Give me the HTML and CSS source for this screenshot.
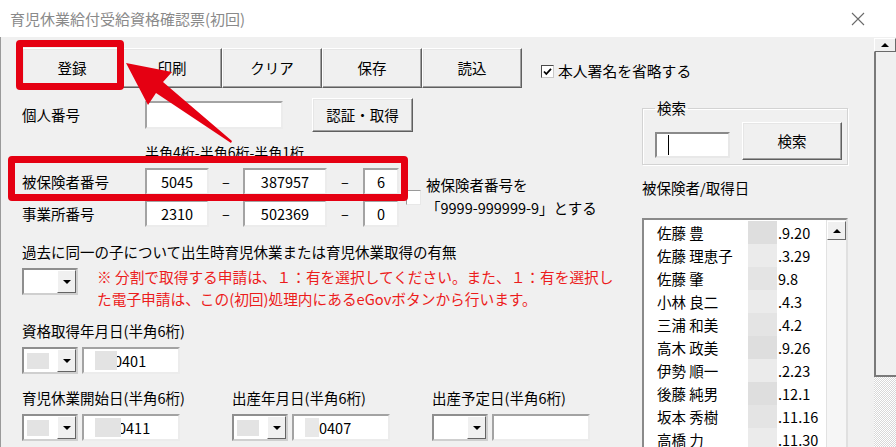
FILE: index.html
```html
<!DOCTYPE html>
<html lang="ja">
<head>
<meta charset="utf-8">
<title>育児休業給付受給資格確認票(初回)</title>
<link rel="stylesheet" href="styles.css">
</head>
<body>
<div class="win">
  <div class="titlebar">
    <span class="title">育児休業給付受給資格確認票(初回)</span>
    <svg class="close" width="14" height="14" viewBox="0 0 14 14"><path d="M1 1L13 13M13 1L1 13" stroke="#6a6a6a" stroke-width="1.1"/></svg>
  </div>
  <div class="client">
    <div class="form">
      <div class="toolbar">
        <div class="btn tbtn">登録</div>
        <div class="btn tbtn">印刷</div>
        <div class="btn tbtn">クリア</div>
        <div class="btn tbtn">保存</div>
        <div class="btn tbtn">読込</div>
        <div class="chkline">
          <span class="chk"><svg width="11" height="11" viewBox="0 0 11 11"><path d="M2 5.5L4.3 8L9 2.8" fill="none" stroke="#000" stroke-width="1.8"/></svg></span>
          <span>本人署名を省略する</span>
        </div>
      </div>
      <div class="cols">
        <div class="left">
          <div class="row r-kojin">
            <span class="lbl">個人番号</span>
            <span class="inp w-kojin"></span>
            <div class="btn btn-auth">認証・取得</div>
          </div>
          <div class="hint">半角4桁-半角6桁-半角1桁</div>
          <div class="idblock">
            <div class="idrows">
              <div class="row r-id">
                <span class="lbl">被保険者番号</span>
                <span class="inp w4 c">5045</span><span class="dash">–</span><span class="inp w6 c">387957</span><span class="dash d2">–</span><span class="inp w1 c">6</span>
              </div>
              <div class="row r-id r-id2">
                <span class="lbl">事業所番号</span>
                <span class="inp w4 c">2310</span><span class="dash">–</span><span class="inp w6 c">502369</span><span class="dash d2">–</span><span class="inp w1 c">0</span>
              </div>
            </div>
            <div class="idnote">
              <span class="box"></span>
              <div class="notetext">被保険者番号を<br>「9999-999999-9」とする</div>
            </div>
          </div>
          <div class="q">過去に同一の子について出生時育児休業または育児休業取得の有無</div>
          <div class="row r-warn">
            <span class="combo"><span class="cfield"></span><span class="dd"><i class="tri"></i></span></span>
            <div class="warn">※ 分割で取得する申請は、１：有を選択してください。また、１：有を選択し<br>た電子申請は、この(初回)処理内にあるeGovボタンから行います。</div>
          </div>
          <div class="q q2">資格取得年月日(半角6桁)</div>
          <div class="row r-date">
            <span class="combo"><span class="cfield"><i class="blur bl-c"></i></span><span class="dd"><i class="tri"></i></span></span>
            <span class="inp wd"><i class="blur bl-i"></i>0401</span>
          </div>
          <div class="dates">
            <div class="dcell">
              <div class="q">育児休業開始日(半角6桁)</div>
              <div class="row r-date">
                <span class="combo"><span class="cfield"><i class="blur bl-c"></i></span><span class="dd"><i class="tri"></i></span></span>
                <span class="inp wd"><i class="blur bl-i bl-w"></i>0411</span>
              </div>
            </div>
            <div class="dcell">
              <div class="q">出産年月日(半角6桁)</div>
              <div class="row r-date">
                <span class="combo"><span class="cfield"><i class="blur bl-c"></i></span><span class="dd"><i class="tri"></i></span></span>
                <span class="inp wd"><i class="blur bl-i bl-s"></i>0407</span>
              </div>
            </div>
            <div class="dcell">
              <div class="q">出産予定日(半角6桁)</div>
              <div class="row r-date">
                <span class="combo"><span class="cfield"></span><span class="dd"><i class="tri"></i></span></span>
                <span class="inp wd"></span>
              </div>
            </div>
          </div>
        </div>
        <div class="right">
          <fieldset class="group">
            <legend>検索</legend>
            <span class="inp sinp"><i class="caret"></i></span>
            <div class="btn sbtn">検索</div>
          </fieldset>
          <div class="listlbl">被保険者/取得日</div>
          <div class="list">
            <div class="items">
              <div class="it"><span class="nm">佐藤 豊</span><i class="pb p1"></i><span>.9.20</span></div>
              <div class="it"><span class="nm">佐藤 理恵子</span><i class="pb p2"></i><span>.3.29</span></div>
              <div class="it"><span class="nm">佐藤 肇</span><i class="pb p3"></i><span>9.8</span></div>
              <div class="it"><span class="nm">小林 良二</span><i class="pb p2"></i><span>.4.3</span></div>
              <div class="it"><span class="nm">三浦 和美</span><i class="pb p3"></i><span>.4.2</span></div>
              <div class="it"><span class="nm">高木 政美</span><i class="pb p1"></i><span>.9.26</span></div>
              <div class="it"><span class="nm">伊勢 順一</span><i class="pb p2"></i><span>.2.23</span></div>
              <div class="it"><span class="nm">後藤 純男</span><i class="pb p1"></i><span>.12.1</span></div>
              <div class="it"><span class="nm">坂本 秀樹</span><i class="pb p3"></i><span>.11.16</span></div>
              <div class="it"><span class="nm">高橋 力</span><i class="pb p2"></i><span>.11.30</span></div>
            </div>
            <div class="lscroll"><div class="sbtnup"><i class="utri"></i></div></div>
          </div>
        </div>
      </div>
    </div>
    <div class="vscroll">
      <div class="vup"><i class="utri"></i></div>
      <div class="vthumb"></div>
      <div class="vtrack"></div>
    </div>
  </div>
  <div class="hl hl1"></div>
  <div class="hl hl2"></div>
  <svg class="arrow" width="896" height="447" viewBox="0 0 896 447">
    <polygon points="126,63 172,72 163,82 232,141 231,143 156,93 148,105" fill="#e50012"/>
  </svg>
</div>
</body>
</html>
```

FILE: styles.css
```css
* { box-sizing: border-box; }
body {
  margin: 0;
  width: 896px;
  height: 447px;
  overflow: hidden;
  background: #f0f0f0;
  font-family: "Noto Sans CJK JP", "Noto Sans", sans-serif;
  font-size: 14.5px;
  color: #000;
}
.win { position: relative; width: 896px; height: 447px; }

.titlebar {
  height: 37px;
  background: #fff;
  display: flex;
  align-items: center;
  justify-content: space-between;
  padding: 0 31px 0 10px;
}
.title { color: #8a8a8a; font-size: 15px; line-height: 20px; }
.close { display: block; }

.client { display: flex; height: 410px; border-left: 1px solid #9a9a9a; }
.form { flex: 1; }

.btn {
  background: #f0f0f0;
  border: 1px solid;
  border-color: #fff #5f5f5f #5f5f5f #fff;
  box-shadow: inset -1px -1px #a0a0a0, inset 1px 1px #e6e6e6;
  display: flex;
  align-items: center;
  justify-content: center;
  line-height: 20px;
}
.toolbar { display: flex; align-items: center; padding: 11px 0 0 21px; height: 51px; }
.tbtn { width: 100px; height: 40px; }
.chkline { display: flex; align-items: center; margin-left: 19px; margin-top: 6px; line-height: 20px; font-size: 14.8px; }
.chk {
  width: 13px; height: 13px; background: #fff;
  border: 1px solid; border-color: #4a4a4a #c8c8c8 #c8c8c8 #4a4a4a;
  display: flex; align-items: center; justify-content: center;
  margin-right: 4px;
}
.chk svg { display: block; }

.cols { display: flex; margin-top: 10px; }
.left { width: 641px; padding-left: 21px; }
.right { width: 206px; }

.row { display: flex; align-items: center; }
.lbl { width: 123px; line-height: 20px; }
.inp {
  background: #fff;
  border: 2px solid; border-color: #a3a3a3 #ececec #ececec #a3a3a3;
  display: flex; align-items: center;
  line-height: 20px;
}
.c { justify-content: center; }
.r-kojin { height: 34px; }
.w-kojin { width: 138px; height: 28px; }
.btn-auth { width: 101px; height: 34px; margin-left: 29px; }
.hint { padding-left: 123px; margin-top: 10px; line-height: 20px; font-size: 14px; }

.idblock { display: flex; margin-top: 6px; }
.r-id { height: 27px; }
.r-id2 { margin-top: 5px; }
.w4 { width: 64px; height: 27px; }
.w6 { width: 84px; height: 27px; }
.w1 { width: 36px; height: 27px; }
.dash { width: 34px; text-align: center; line-height: 20px; }
.d2 { width: 36px; }
.idnote { display: flex; margin-left: 7px; }
.box {
  width: 15px; height: 15px; margin-top: 22px; background: #fff;
  border: 1px solid; border-color: #9a9a9a #e8e8e8 #e8e8e8 #9a9a9a;
}
.notetext { margin-left: 5px; margin-top: 5px; line-height: 23px; }

.q { line-height: 20px; margin-top: 15px; }
.q2 { margin-top: 11px; }
.r-warn { align-items: flex-start; margin-top: 4px; }
.combo {
  width: 56px; height: 27px; display: flex; background: #fff;
  border: 2px solid; border-color: #8e8e8e #cfcfcf #cfcfcf #8e8e8e;
}
.r-warn .combo { margin-top: 2px; }
.cfield { flex: 1; display: flex; align-items: center; padding-left: 3px; }
.dd {
  width: 19px; background: #f0f0f0;
  border: 1px solid; border-color: #fff #646464 #646464 #fff;
  display: flex; align-items: center; justify-content: center;
}
.tri { width: 0; height: 0; border-left: 4px solid transparent; border-right: 4px solid transparent; border-top: 4px solid #000; }
.warn { color: #ec1c1c; margin-left: 19px; line-height: 22px; font-size: 14.7px; }

.r-date { margin-top: 6px; }
.wd { width: 98px; height: 27px; margin-left: 4px; padding-left: 11px; }
.blur { display: block; background: #e3e3e3; }
.bl-c { width: 22px; height: 16px; }
.bl-i { width: 22px; height: 19px; margin-right: -3px; position: relative; }
.bl-w { width: 26px; }
.bl-s { width: 14px; background: #e8e8e8; margin-right: 0; }

.dates { display: grid; grid-template-columns: 210px 200px 200px; }
.dates .q { margin-top: 14px; }

.group {
  margin: 0;
  padding: 0 0 4px 12px;
  border: 1px solid #d3d3d3;
  box-shadow: 1px 1px #fff, inset 1px 1px #fff;
  height: 67px;
  display: flex;
  align-items: flex-start;
  min-width: 0;
}
.group legend { padding: 0 2px; margin-left: 0; line-height: 20px; }
.sinp { width: 75px; height: 26px; margin-top: 14px; padding-left: 11px; border-color: #8a8a8a #e8e8e8 #e8e8e8 #8a8a8a; }
.caret { display: block; width: 1px; height: 20px; background: #000; }
.sbtn { width: 100px; height: 38px; margin-left: 12px; margin-top: 4px; }
.listlbl { margin-top: 13px; line-height: 20px; }
.list {
  margin-top: 20px;
  height: 240px;
  background: #fff;
  border: 2px solid; border-color: #8a8a8a #e0e0e0 #e0e0e0 #8a8a8a;
  display: flex;
}
.items { flex: 1; padding-top: 1px; padding-left: 13px; }
.it { display: flex; height: 23px; align-items: center; line-height: 20px; }
.nm { width: 91px; }
.pb { display: block; width: 29px; height: 23px; margin-right: 1px; }
.p1 { background: #dedede; }
.p2 { background: #ebebeb; }
.p3 { background: #e4e4e4; }
.lscroll { width: 20px; background: #f6f6f6; border-left: 1px solid #e2e2e2; padding-top: 1px; }
.sbtnup {
  height: 19px; background: #f0f0f0;
  border: 1px solid; border-color: #fff #6a6a6a #6a6a6a #fff;
  display: flex; align-items: center; justify-content: center;
}
.utri { width: 0; height: 0; border-left: 4px solid transparent; border-right: 4px solid transparent; border-bottom: 4px solid #000; }

.vscroll { width: 22px; display: flex; flex-direction: column; padding-top: 1px; }
.vup {
  height: 14px; background: #f0f0f0;
  border: 1px solid; border-color: #fff #6a6a6a #6a6a6a #fff;
  display: flex; align-items: center; justify-content: center;
}
.vthumb { height: 325px; background: #f0f0f0; border-left: 2px solid #7a7a7a; border-bottom: 2px solid #7a7a7a; }
.vtrack {
  flex: 1;
  background: repeating-conic-gradient(#fff 0 25%, #d8d8d8 0 50%) 0 0 / 2px 2px;
}

.hl { position: absolute; border: 7px solid #e50012; border-radius: 4px; pointer-events: none; }
.hl1 { left: 16px; top: 40px; width: 108px; height: 50px; }
.hl2 { left: 8px; top: 156px; width: 400px; height: 45px; }
.arrow { position: absolute; left: 0; top: 0; pointer-events: none; }
```
